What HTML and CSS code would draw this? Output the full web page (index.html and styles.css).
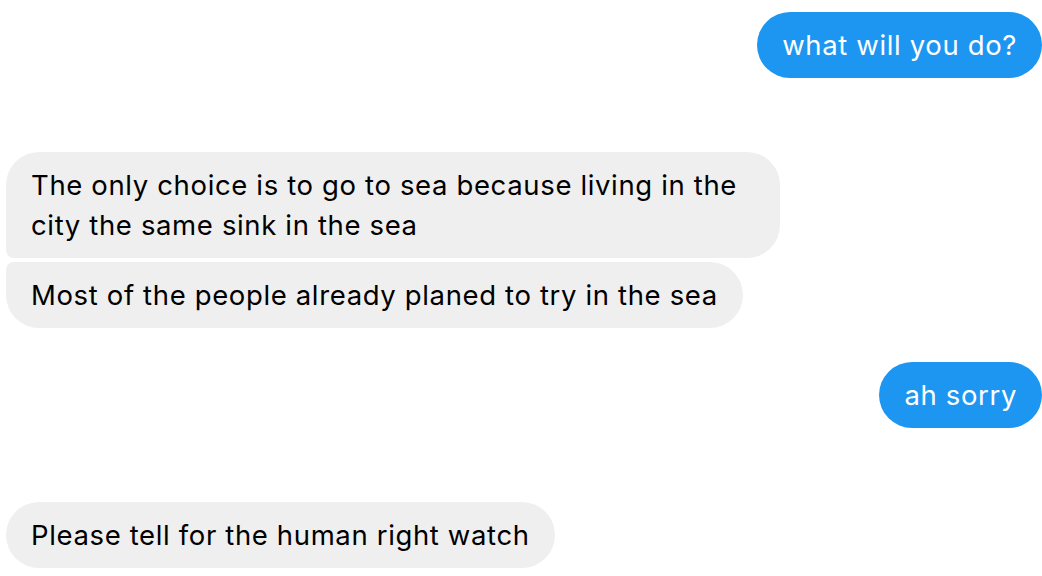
FILE: index.html
```html
<!DOCTYPE html>
<html>
<head>
<meta charset="utf-8">
<link rel="stylesheet" href="styles.css">
</head>
<body>
<div class="chat">
  <div class="msg out first">what will you do?</div>
  <div class="group in-group">
    <div class="msg in top wrap">The only choice is to go to sea because living in the<br>city the same sink in the sea</div>
    <div class="msg in bottom">Most of the people already planed to try in the sea</div>
  </div>
  <div class="msg out mid">ah sorry</div>
  <div class="group in-group">
    <div class="msg in">Please tell for the human right watch</div>
  </div>
</div>
</body>
</html>
```
FILE: styles.css
```css
html, body {
  margin: 0;
  padding: 0;
  background: #ffffff;
}
.chat {
  display: flex;
  flex-direction: column;
  padding: 12px 0 0 6px;
  width: 1036px;
  font-family: "Inter", "Noto Sans", sans-serif;
  font-size: 27.5px;
  letter-spacing: 0.64px;
  line-height: 40px;
}
.msg {
  box-sizing: border-box;
  padding: 13px 25px;
  border-radius: 33px;
  white-space: nowrap;
}
.out {
  align-self: flex-end;
  background: #1d96f2;
  color: #ffffff;
}
.in {
  background: #efefef;
  color: #000000;
}
.wrap {
  width: 774px;
}
.group {
  display: flex;
  flex-direction: column;
  align-items: flex-start;
  gap: 4px;
  margin-top: 74px;
}
.in.top {
  border-bottom-left-radius: 8px;
}
.in.bottom {
  border-top-left-radius: 8px;
}
.mid {
  margin-top: 34px;
}
```
